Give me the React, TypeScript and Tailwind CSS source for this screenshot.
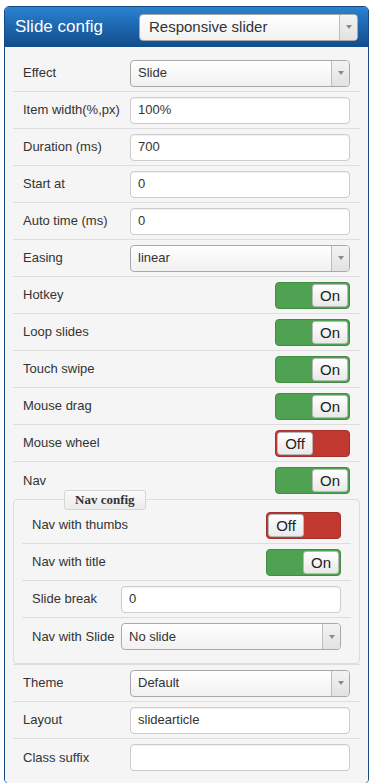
import React from "react";

type Field =
  | { kind: "select"; label: string; value: string }
  | { kind: "input"; label: string; value: string }
  | { kind: "toggle"; label: string; on: boolean };

const mainFields: Field[] = [
  { kind: "select", label: "Effect", value: "Slide" },
  { kind: "input", label: "Item width(%,px)", value: "100%" },
  { kind: "input", label: "Duration (ms)", value: "700" },
  { kind: "input", label: "Start at", value: "0" },
  { kind: "input", label: "Auto time (ms)", value: "0" },
  { kind: "select", label: "Easing", value: "linear" },
  { kind: "toggle", label: "Hotkey", on: true },
  { kind: "toggle", label: "Loop slides", on: true },
  { kind: "toggle", label: "Touch swipe", on: true },
  { kind: "toggle", label: "Mouse drag", on: true },
  { kind: "toggle", label: "Mouse wheel", on: false },
];

const navFields: Field[] = [
  { kind: "toggle", label: "Nav with thumbs", on: false },
  { kind: "toggle", label: "Nav with title", on: true },
  { kind: "input", label: "Slide break", value: "0" },
  { kind: "select", label: "Nav with Slide", value: "No slide" },
];

const tailFields: Field[] = [
  { kind: "select", label: "Theme", value: "Default" },
  { kind: "input", label: "Layout", value: "slidearticle" },
  { kind: "input", label: "Class suffix", value: "" },
];

function Select({ value, big }: { value: string; big?: boolean }) {
  return (
    <div className="flex h-[27px] w-full overflow-hidden rounded-[4px] border border-[#a9a9a9] bg-linear-to-b from-white to-[#f1f1f1]">
      <div
        className={`flex flex-1 items-center text-[#333] ${
          big ? "pl-[9px] text-[15px]" : "pl-[7px] text-[13px]"
        }`}
      >
        {value}
      </div>
      <div className="flex w-[18px] items-center justify-center border-l border-[#bdbdbd] bg-linear-to-b from-[#f3f3f3] to-[#e2e2e2]">
        <span className="h-0 w-0 border-x-[3.5px] border-t-[4px] border-x-transparent border-t-[#8a8a8a]" />
      </div>
    </div>
  );
}

function Input({ value }: { value: string }) {
  return (
    <div className="flex h-[27px] w-full items-center rounded-[4px] border border-[#cccccc] bg-white pl-[7px] text-[13px] text-[#333] shadow-[inset_0_1px_1px_rgba(0,0,0,0.06)]">
      {value}
    </div>
  );
}

function Toggle({ on }: { on: boolean }) {
  return (
    <div
      className={`flex h-[27px] w-[75px] rounded-[4px] border p-[1px] ${
        on
          ? "justify-end border-[#3f8e42] bg-[#4fa251]"
          : "justify-start border-[#a8302a] bg-[#c13830]"
      }`}
    >
      <div className="flex h-full w-[36px] items-center justify-center rounded-[3px] border border-[#b8b8b8] bg-linear-to-b from-white to-[#e9e9e9] text-[15px] leading-none text-[#222]">
        {on ? "On" : "Off"}
      </div>
    </div>
  );
}

function Control({ f }: { f: Field }) {
  if (f.kind === "select") return <Select value={f.value} />;
  if (f.kind === "input") return <Input value={f.value} />;
  return <Toggle on={f.on} />;
}

function Row({
  f,
  labelW,
  last,
}: {
  f: Field;
  labelW: string;
  last?: boolean;
}) {
  return (
    <div
      className={`flex h-[37px] items-center pl-[10px] pr-[10px] ${
        last ? "h-[36px]" : "border-b border-[#dddddd]"
      }`}
    >
      <div
        className={`${labelW} shrink-0 whitespace-nowrap text-[13px] text-[#333]`}
      >
        {f.label}
      </div>
      <div className="flex flex-1 justify-end">
        <Control f={f} />
      </div>
    </div>
  );
}

export default function App() {
  return (
    <div
      className="min-h-screen bg-white pt-[6px]"
      style={{ fontFamily: '"Liberation Sans", Arial, sans-serif' }}
    >
      <div className="ml-[4px] w-[365px] overflow-hidden rounded-[5px] border border-[#184a82]">
        {/* Header */}
        <div className="flex h-[40px] items-center bg-linear-to-b from-[#2b82d2] to-[#114c8b] pl-[10px] pr-[10px]">
          <div className="flex-1 text-[17px] text-white">Slide config</div>
          <div className="w-[219px]">
            <Select value="Responsive slider" big />
          </div>
        </div>

        {/* Body */}
        <div className="bg-[#f5f5f5] px-2 pb-[7px] pt-[8px]">
          {mainFields.map((f) => (
            <Row key={f.label} f={f} labelW="w-[107px]" />
          ))}

          {/* Nav + nested config */}
          <div className="border-b border-[#dddddd]">
            <div className="flex h-[37px] items-center pl-[10px] pr-[10px]">
              <div className="w-[107px] shrink-0 text-[13px] text-[#333]">
                Nav
              </div>
              <div className="flex flex-1 justify-end">
                <Toggle on />
              </div>
            </div>
            <div className="relative rounded-[4px] border border-[#dcdcdc] bg-[#f5f5f5] px-2 pb-[8px] pt-[7px]">
              <div
                className="absolute -top-[10px] left-[50px] flex h-[20px] items-center rounded-[3px] border border-[#d6d6d6] bg-linear-to-b from-[#fafafa] to-[#ececec] px-[10px] text-[13px] font-bold text-[#333]"
                style={{ fontFamily: '"Liberation Serif", "Times New Roman", serif' }}
              >
                Nav config
              </div>
              {navFields.map((f, i) => (
                <Row
                  key={f.label}
                  f={f}
                  labelW="w-[89px]"
                  last={i === navFields.length - 1}
                />
              ))}
            </div>
          </div>

          {tailFields.map((f, i) => (
            <Row
              key={f.label}
              f={f}
              labelW="w-[107px]"
              last={i === tailFields.length - 1}
            />
          ))}
        </div>
      </div>
    </div>
  );
}
